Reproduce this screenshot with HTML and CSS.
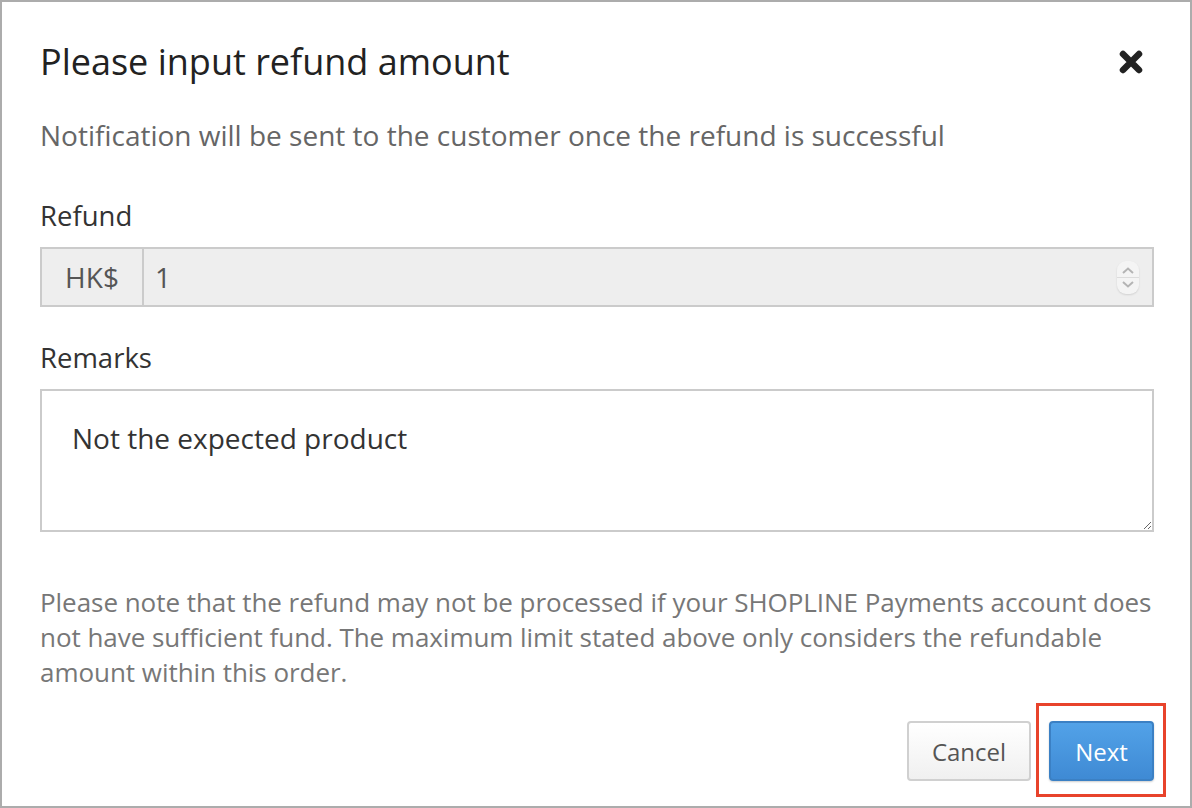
FILE: index.html
```html
<html>
	<head>
		<title>Refund</title>
		<link rel="stylesheet" href="styles.css">
	</head>
	<body>
		<div class="modal">
			<div class="modal-header">
				<h1 class="modal-title">Please input refund amount</h1>
				<button class="close" type="button">
					<svg width="24" height="24" viewBox="0 0 24 24">
						<path d="M4 4 L20 20 M20 4 L4 20" stroke="#222" stroke-width="6.5" stroke-linecap="round" fill="none"/>
					</svg>
				</button>
			</div>

			<p class="subtitle">Notification will be sent to the customer once the refund is successful</p>

			<label class="field-label">Refund</label>
			<div class="input-group">
				<span class="addon">HK$</span>
				<div class="amount">
					<span>1</span>
					<span class="spinner">
						<svg width="22" height="33" viewBox="0 0 22 33">
							<path d="M6 12 L11 7.5 L16 12" stroke="#b4b4b4" stroke-width="2" fill="none"/>
							<path d="M6 21 L11 25.5 L16 21" stroke="#b4b4b4" stroke-width="2" fill="none"/>
						</svg>
					</span>
				</div>
			</div>

			<label class="field-label remarks-label">Remarks</label>
			<textarea class="remarks">Not the expected product</textarea>

			<p class="note">Please note that the refund may not be processed if your SHOPLINE Payments account does not have sufficient fund. The maximum limit stated above only considers the refundable amount within this order.</p>

			<div class="modal-footer">
				<button class="btn btn-default" type="button">Cancel</button>
				<span class="highlight-wrap">
					<button class="btn btn-primary" type="button">Next</button>
					<span class="highlight"></span>
				</span>
			</div>
		</div>
	</body>
</html>
```

FILE: styles.css
```css
body {
	margin: 0;
	font-family: "Open Sans", "Noto Sans", sans-serif;
	color: #333;
}
.modal {
	box-sizing: border-box;
	width: 1192px;
	height: 808px;
	border: 2px solid #acacac;
	padding: 38px 36px 0 38px;
	display: flex;
	flex-direction: column;
	background: #fff;
}
.modal-header {
	display: flex;
	justify-content: space-between;
	align-items: center;
}
.modal-title {
	margin: 0;
	font-size: 36px;
	line-height: 44px;
	font-weight: 400;
	color: #222;
}
.close {
	border: none;
	background: none;
	padding: 0;
	margin-right: 11px;
	width: 24px;
	height: 24px;
	display: flex;
}
.subtitle {
	margin: 33px 0 0;
	font-size: 28px;
	line-height: 36px;
	color: #666;
}
.field-label {
	display: block;
	margin-top: 45px;
	font-size: 27.5px;
	line-height: 36px;
	color: #333;
}
.remarks-label {
	margin-top: 33px;
}
.input-group {
	margin-top: 13px;
	display: flex;
	height: 60px;
	box-sizing: border-box;
	border: 2px solid #cbcbcb;
	background: #eeeeee;
	font-size: 28px;
	color: #555;
}
.addon {
	width: 102px;
	box-sizing: border-box;
	border-right: 2px solid #cbcbcb;
	display: flex;
	align-items: center;
	justify-content: center;
}
.amount {
	flex: 1;
	display: flex;
	align-items: center;
	justify-content: space-between;
	padding: 0 13px 0 11px;
}
.spinner {
	display: flex;
	width: 22px;
	height: 33px;
	border-radius: 9px;
	background: #f4f4f4;
	box-shadow: 0 1px 2px rgba(0, 0, 0, 0.12);
	position: relative;
}
.spinner::after {
	content: "";
	position: absolute;
	left: 0;
	right: 0;
	top: 16px;
	height: 1px;
	background: #dcdcdc;
}
.remarks {
	margin-top: 13px;
	height: 143px;
	box-sizing: border-box;
	border: 2px solid #cbcbcb;
	border-radius: 0;
	padding: 29px 30px;
	font-family: "Open Sans", "Noto Sans", sans-serif;
	font-size: 28px;
	line-height: 36px;
	color: #333;
	resize: vertical;
	outline: none;
}
.note {
	margin: 53px 0 0;
	font-size: 26px;
	letter-spacing: -0.04px;
	line-height: 35px;
	color: #777;
}
.modal-footer {
	margin-top: 31px;
	display: flex;
	justify-content: flex-end;
	gap: 18px;
}
.btn {
	height: 60px;
	box-sizing: border-box;
	border-radius: 4px;
	font-family: "Open Sans", "Noto Sans", sans-serif;
	font-size: 24px;
	padding: 0;
}
.btn-default {
	width: 124px;
	border: 2px solid #d0d0d0;
	background: linear-gradient(#ffffff, #f0f0f0);
	color: #555;
}
.btn-primary {
	width: 105px;
	border: 2px solid #3b80c4;
	background: linear-gradient(#52a2e8, #3f8ad4);
	color: #fff;
	box-shadow: 0 1px 2px rgba(0, 0, 0, 0.2);
}
.highlight-wrap {
	position: relative;
	display: flex;
}
.highlight {
	position: absolute;
	left: -13px;
	right: -12px;
	top: -18px;
	bottom: -16px;
	border: 3px solid #e8432b;
}
```
